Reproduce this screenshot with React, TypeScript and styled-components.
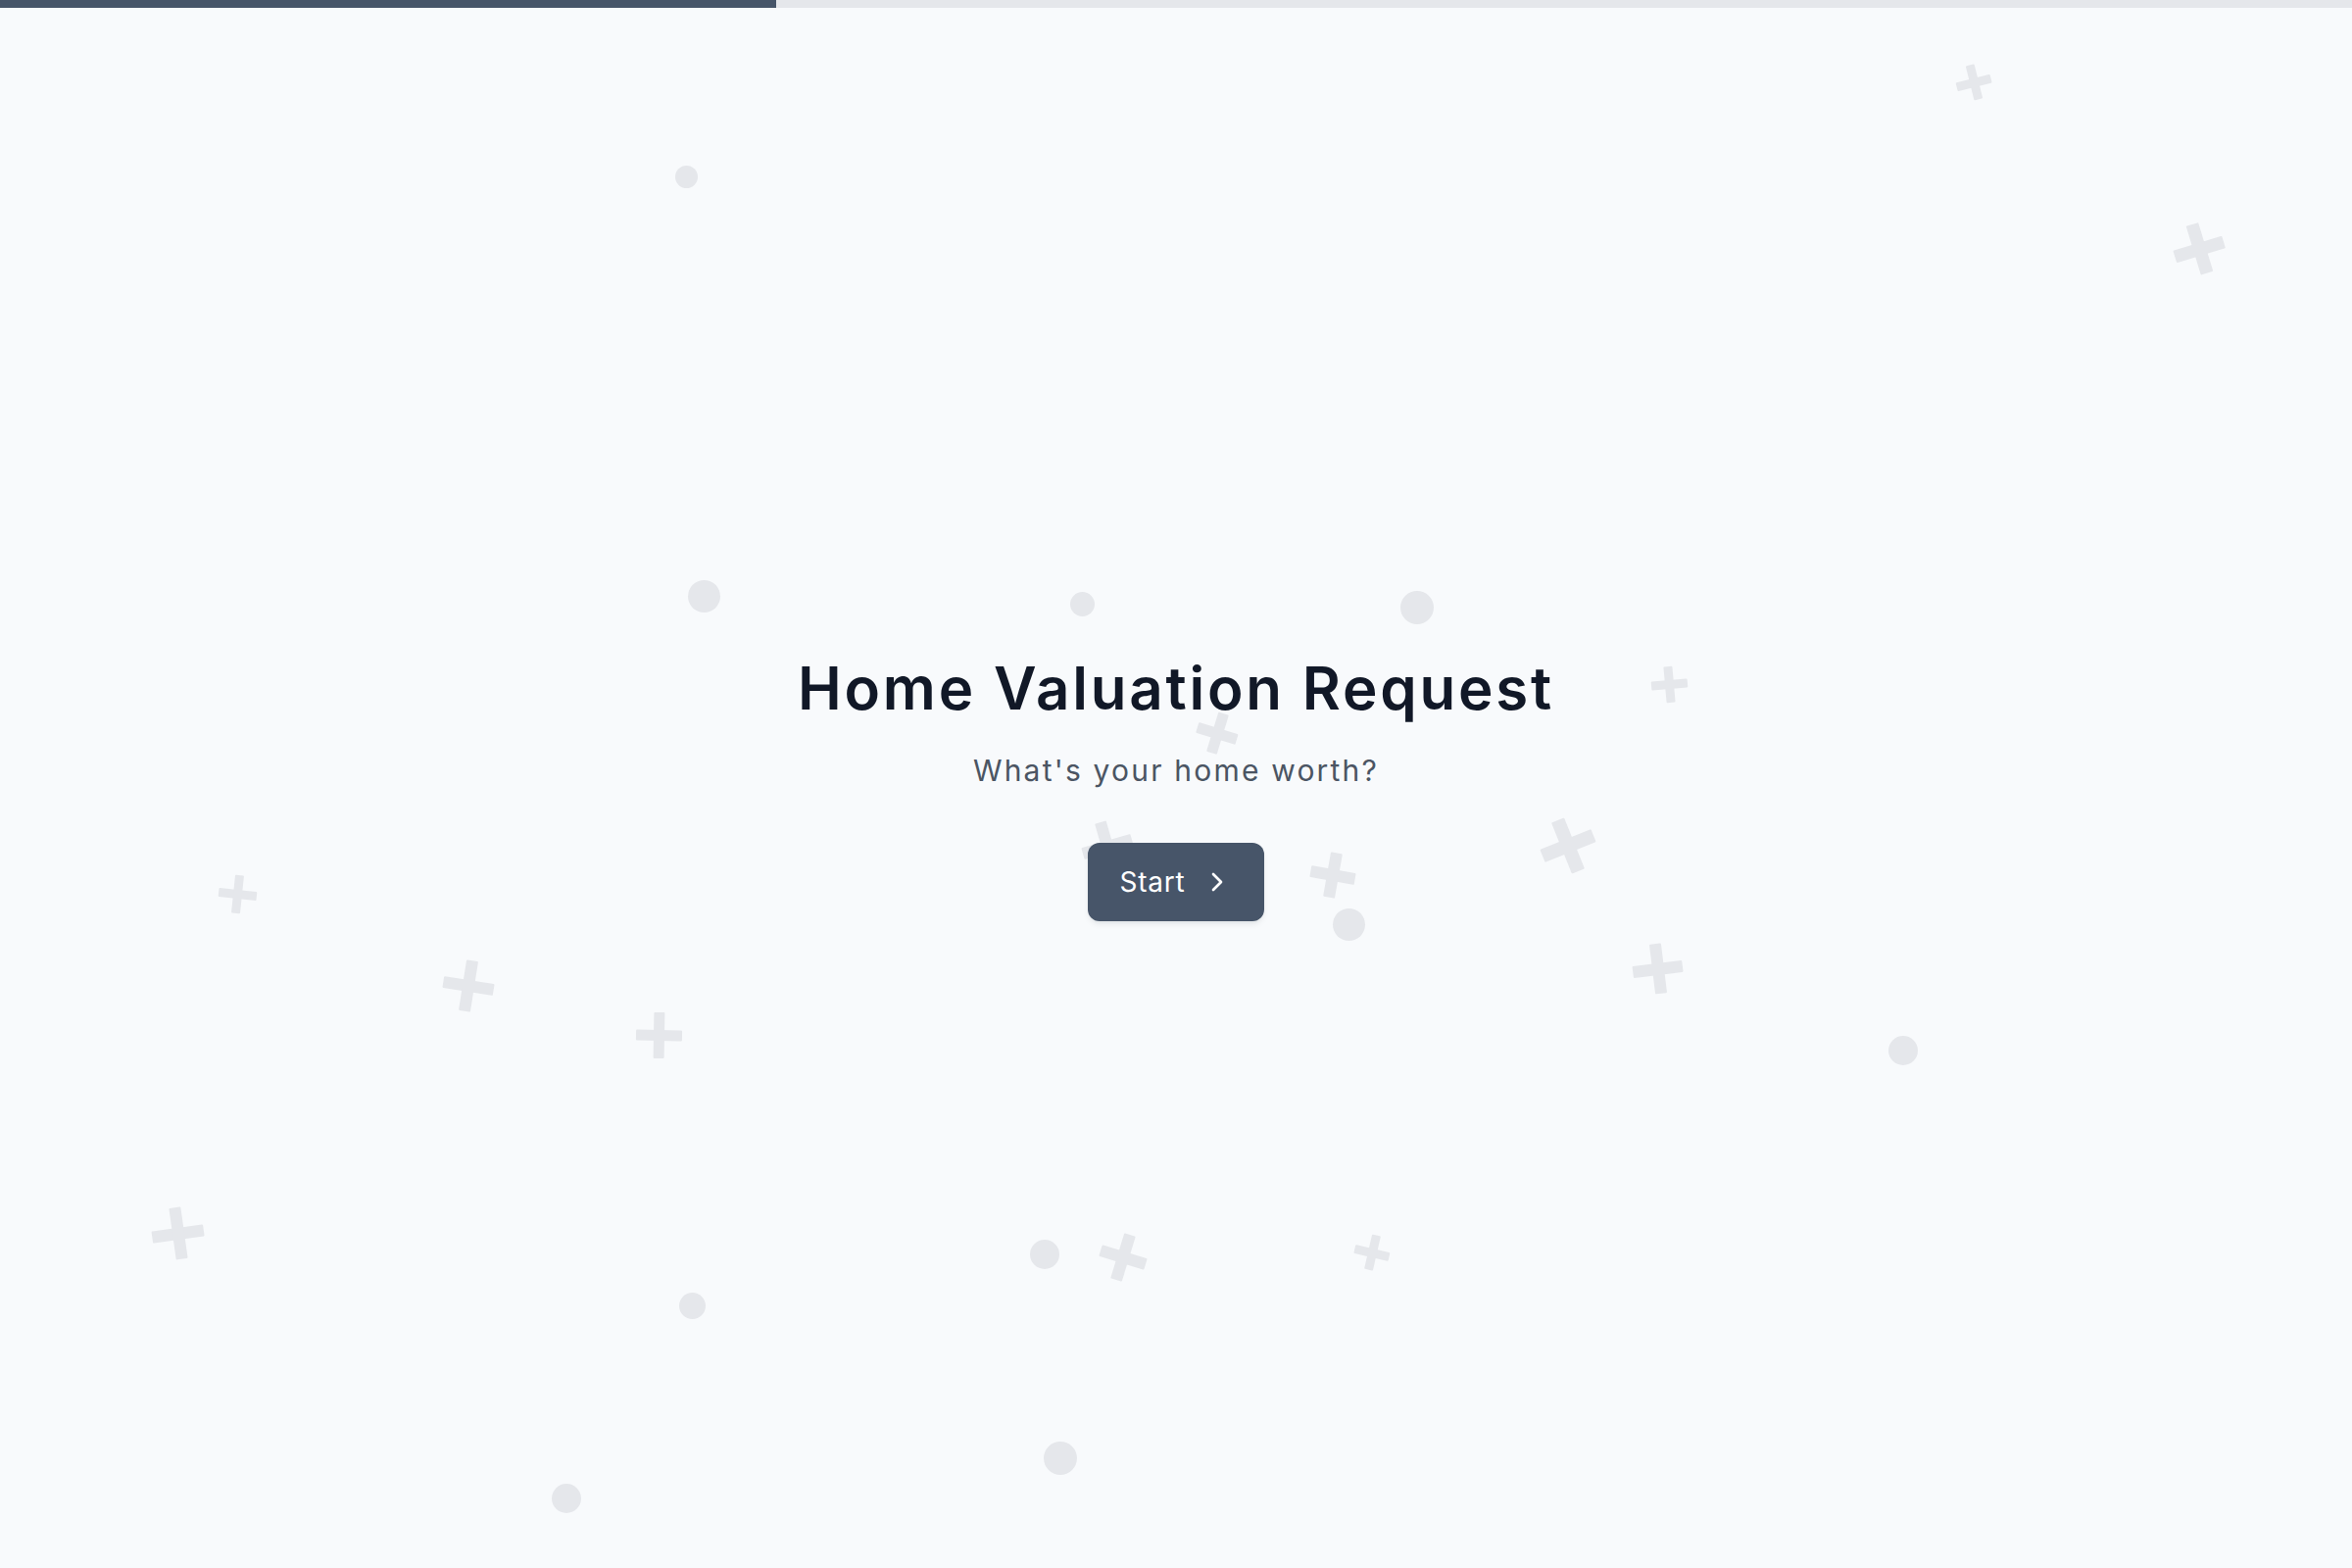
import React from 'react';
import styled, { createGlobalStyle } from 'styled-components';
import { ChevronRight } from 'lucide-react';

const GlobalStyle = createGlobalStyle`
  html, body {
    margin: 0;
    padding: 0;
    background: #f8fafc;
  }
  body {
    font-family: 'Inter', 'Liberation Sans', sans-serif;
    -webkit-font-smoothing: antialiased;
  }
  * {
    box-sizing: border-box;
  }
`;

type Dot = { x: number; y: number; d: number };
type Cross = { x: number; y: number; s: number; t: number; r: number };

// scattered background confetti
const dots: Dot[] = [
  { x: 700, y: 180, d: 23 },
  { x: 718, y: 608, d: 33 },
  { x: 1104, y: 616, d: 25 },
  { x: 1446, y: 620, d: 34 },
  { x: 1376, y: 943, d: 33 },
  { x: 1942, y: 1072, d: 30 },
  { x: 1066, y: 1280, d: 30 },
  { x: 706, y: 1332, d: 27 },
  { x: 1082, y: 1488, d: 34 },
  { x: 578, y: 1529, d: 30 },
];

const crosses: Cross[] = [
  { x: 2014, y: 84, s: 36, t: 9, r: -14 },
  { x: 2244, y: 254, s: 52, t: 13, r: -17 },
  { x: 1703, y: 698, s: 37, t: 9, r: -5 },
  { x: 1242, y: 748, s: 42, t: 11, r: 17 },
  { x: 1130, y: 864, s: 52, t: 12, r: -16 },
  { x: 1360, y: 893, s: 46, t: 12, r: 10 },
  { x: 1600, y: 863, s: 56, t: 14, r: -22 },
  { x: 242, y: 912, s: 39, t: 9, r: 6 },
  { x: 478, y: 1006, s: 52, t: 12, r: 9 },
  { x: 672, y: 1056, s: 47, t: 11, r: 1 },
  { x: 1691, y: 988, s: 51, t: 12, r: -7 },
  { x: 181, y: 1258, s: 53, t: 12, r: -8 },
  { x: 1146, y: 1283, s: 48, t: 12, r: 17 },
  { x: 1400, y: 1278, s: 36, t: 9, r: 13 },
];

const Page = styled.div`
  position: relative;
  min-height: 100vh;
  display: flex;
  flex-direction: column;
  overflow: hidden;
`;

const ProgressTrack = styled.div`
  position: relative;
  z-index: 2;
  height: 8px;
  width: 100%;
  background: #e5e7eb;
`;

const ProgressFill = styled.div<{ $value: number }>`
  height: 100%;
  width: ${p => p.$value}%;
  background: #475569;
`;

const Backdrop = styled.div`
  position: absolute;
  inset: 0;
  pointer-events: none;
  z-index: 0;
`;

const Circle = styled.span<{ $x: number; $y: number; $d: number }>`
  position: absolute;
  left: ${p => p.$x - p.$d / 2}px;
  top: ${p => p.$y - p.$d / 2}px;
  width: ${p => p.$d}px;
  height: ${p => p.$d}px;
  border-radius: 50%;
  background: #e5e7eb;
`;

const Plus = styled.span<{ $x: number; $y: number; $s: number; $t: number; $r: number }>`
  position: absolute;
  left: ${p => p.$x - p.$s / 2}px;
  top: ${p => p.$y - p.$s / 2}px;
  width: ${p => p.$s}px;
  height: ${p => p.$s}px;
  transform: rotate(${p => p.$r}deg);

  &::before,
  &::after {
    content: '';
    position: absolute;
    background: #e5e7eb;
    border-radius: 1px;
  }
  &::before {
    left: 0;
    right: 0;
    top: ${p => (p.$s - p.$t) / 2}px;
    height: ${p => p.$t}px;
  }
  &::after {
    top: 0;
    bottom: 0;
    left: ${p => (p.$s - p.$t) / 2}px;
    width: ${p => p.$t}px;
  }
`;

const Main = styled.main`
  position: relative;
  z-index: 1;
  flex: 1;
  display: flex;
  align-items: center;
  justify-content: center;
`;

const Hero = styled.section`
  display: flex;
  flex-direction: column;
  align-items: center;
  text-align: center;
  padding-top: 3px;
`;

const Title = styled.h1`
  margin: 0 0 36px;
  font-size: 60px;
  line-height: 60px;
  font-weight: 600;
  letter-spacing: 2.8px;
  color: #111827;
`;

const Subtitle = styled.p`
  margin: 0 0 56px;
  font-size: 30px;
  line-height: 36px;
  font-weight: 400;
  letter-spacing: 2.2px;
  color: #4b5563;
`;

const StartButton = styled.button`
  display: inline-flex;
  align-items: center;
  gap: 16px;
  height: 80px;
  padding: 0 32px;
  border: none;
  border-radius: 12px;
  background: #475569;
  color: #fff;
  font-family: inherit;
  font-size: 28px;
  font-weight: 400;
  letter-spacing: 0.8px;
  cursor: pointer;
  box-shadow: 0 4px 6px -1px rgba(15, 23, 42, 0.08), 0 2px 4px -2px rgba(15, 23, 42, 0.06);
  transition: background 0.18s;

  &:hover {
    background: #334155;
  }
`;

const App: React.FC = () => {
  return (
    <Page>
      <GlobalStyle />
      <ProgressTrack>
        <ProgressFill $value={33} />
      </ProgressTrack>
      <Backdrop>
        {dots.map((d, i) => (
          <Circle key={`d${i}`} $x={d.x} $y={d.y} $d={d.d} />
        ))}
        {crosses.map((c, i) => (
          <Plus key={`c${i}`} $x={c.x} $y={c.y} $s={c.s} $t={c.t} $r={c.r} />
        ))}
      </Backdrop>
      <Main>
        <Hero>
          <Title>Home Valuation Request</Title>
          <Subtitle>What's your home worth?</Subtitle>
          <StartButton type="button">
            Start
            <ChevronRight size={32} strokeWidth={2} />
          </StartButton>
        </Hero>
      </Main>
    </Page>
  );
};

export default App;
